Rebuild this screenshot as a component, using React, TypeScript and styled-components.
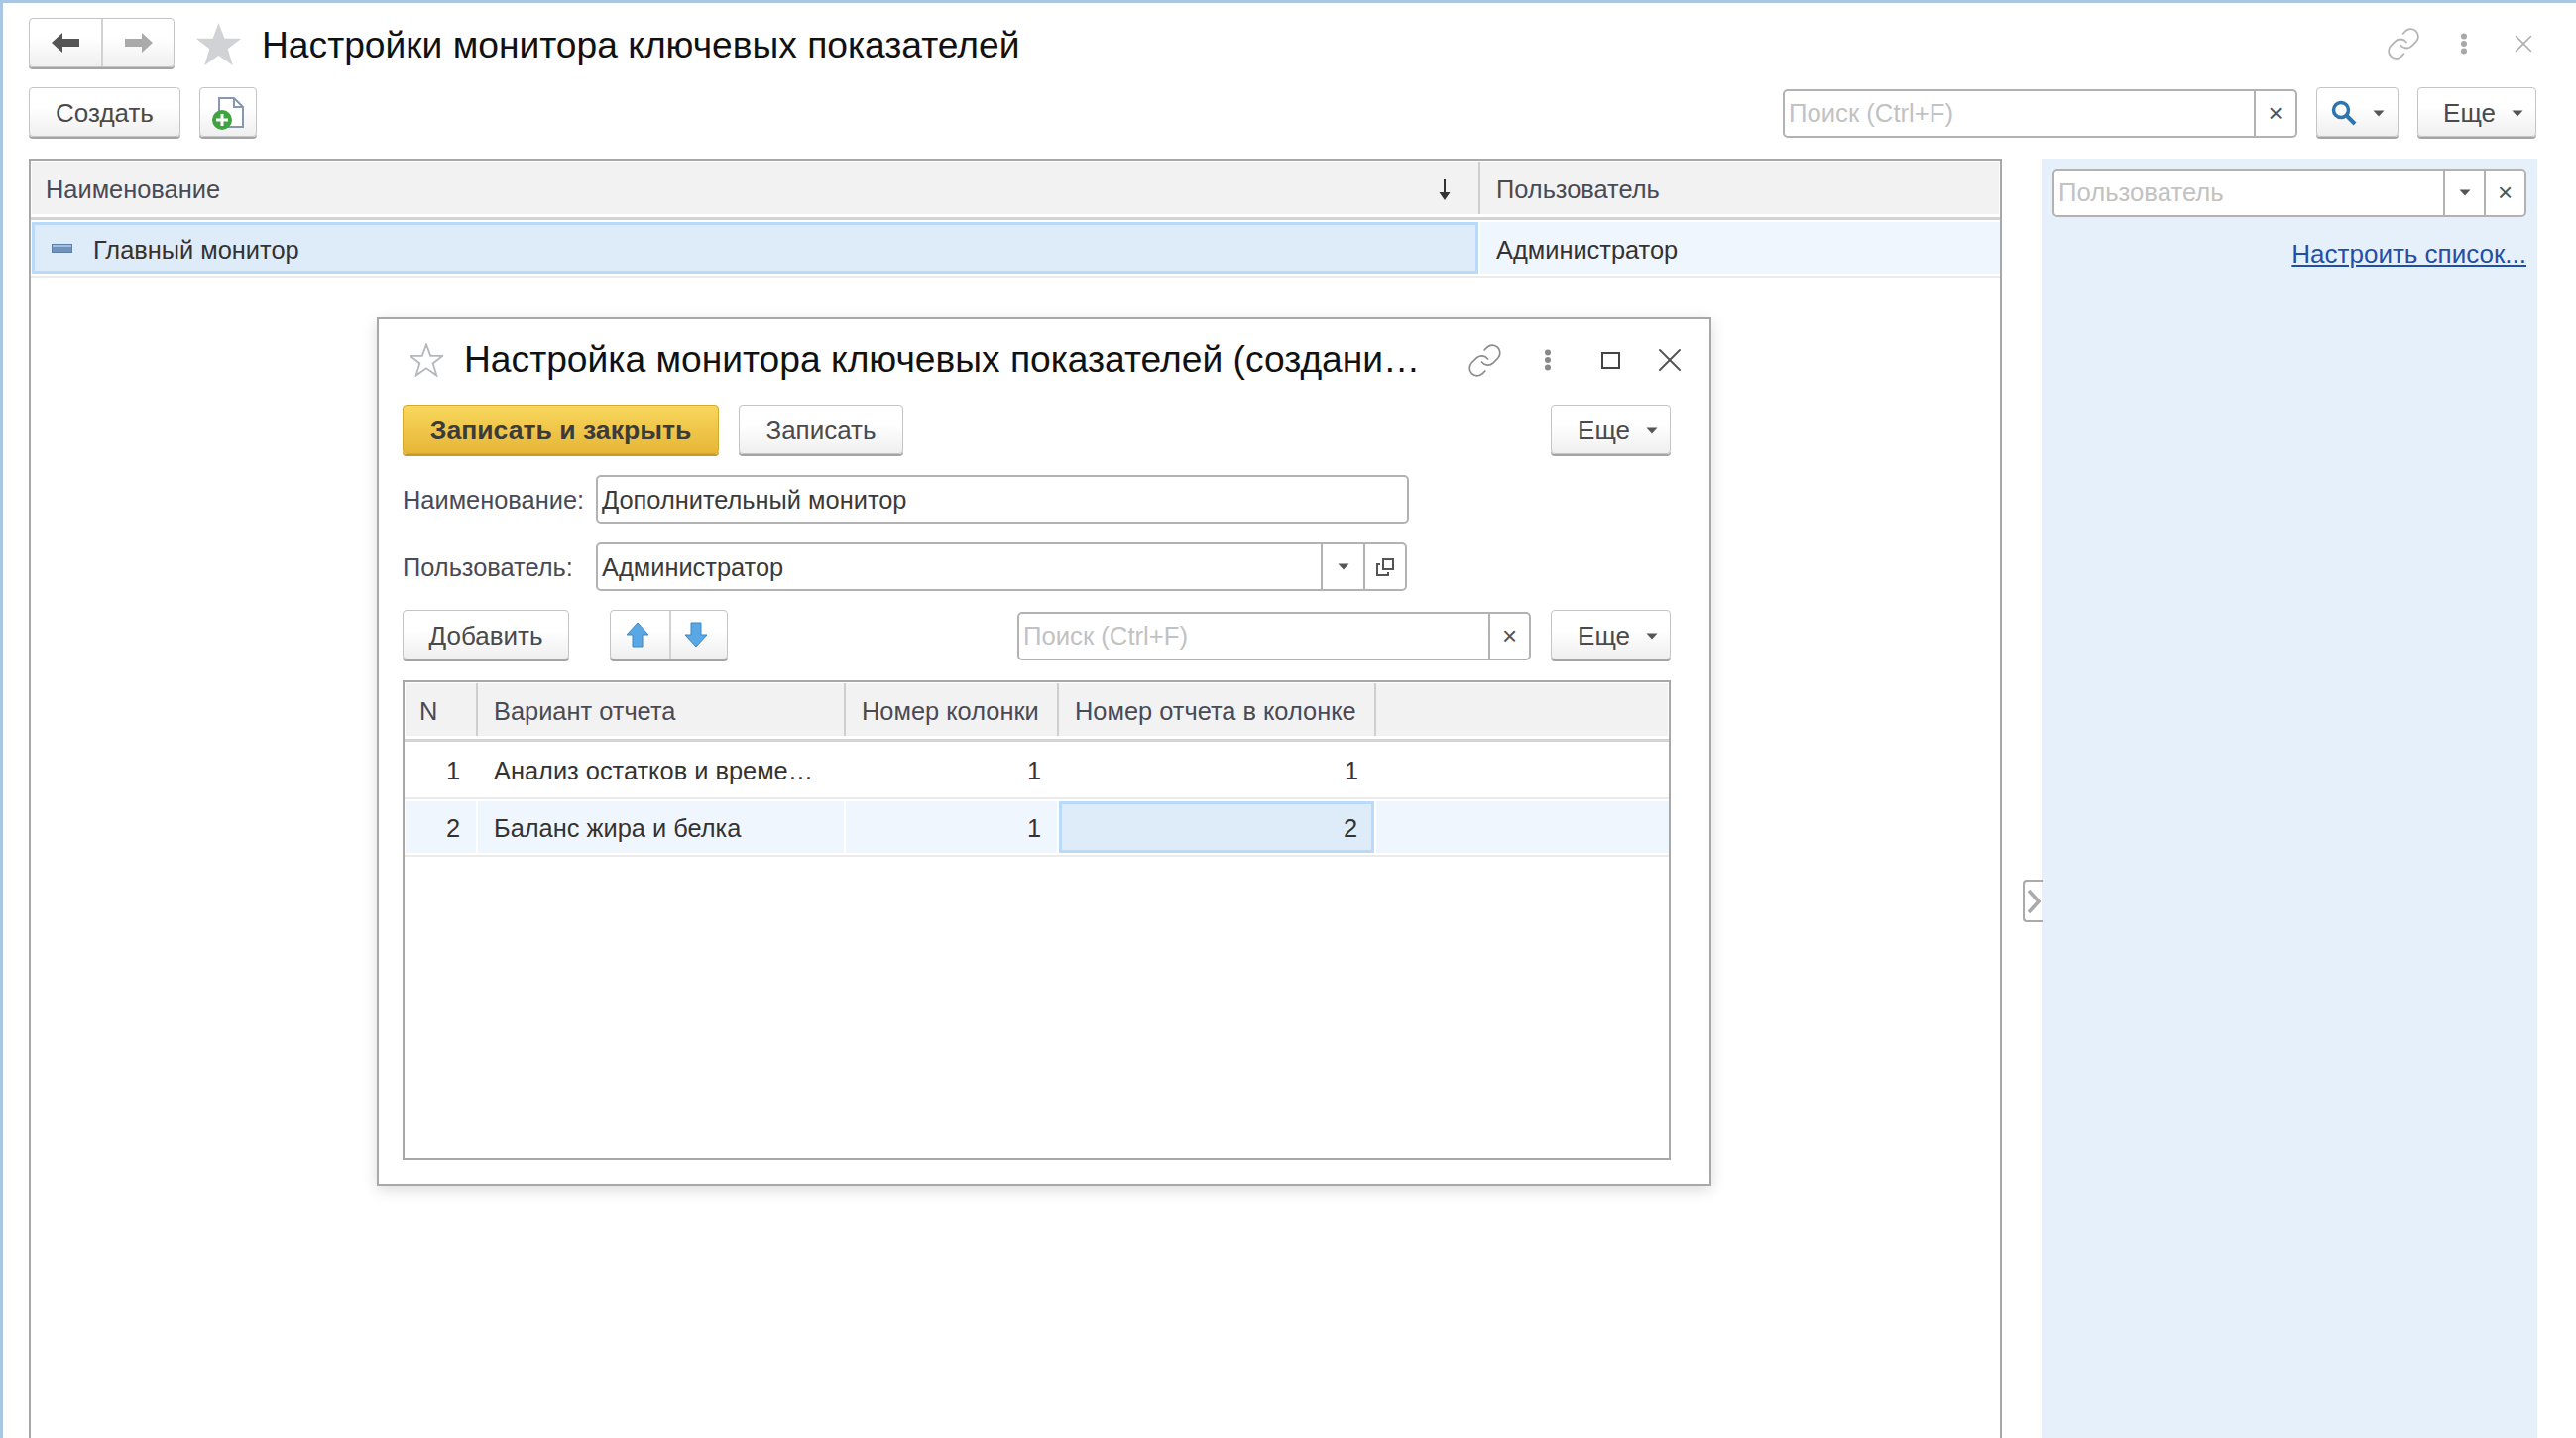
import styled, { createGlobalStyle } from "styled-components";
import { Link, X } from "lucide-react";

const GlobalStyle = createGlobalStyle`
    html, body {
        margin: 0;
        padding: 0;
        background: #fff;
    }

    * {
        box-sizing: border-box;
    }
`;

const Caret = () => (
    <svg width="12" height="7" viewBox="0 0 12 7">
        <path d="M0.5 0.5h11L6 6.5z" fill="#555" />
    </svg>
);

const ArrowLeftIcon = () => (
    <svg width="28" height="20" viewBox="0 0 28 20">
        <path d="M0 10 11 0v6h17v8H11v6z" fill="#555" />
    </svg>
);

const ArrowRightIcon = () => (
    <svg width="28" height="20" viewBox="0 0 28 20">
        <path d="M28 10 17 0v6H0v8h17v6z" fill="#aaa" />
    </svg>
);

const StarIcon = ({ size, hollow }: { size: number; hollow?: boolean }) => (
    <svg width={size} height={size} viewBox="0 0 24 24">
        <path
            d="M12 1l3 8.1h8.6l-6.9 5.3 2.6 8.6L12 17.9 4.7 23l2.6-8.6L.4 9.1H9z"
            fill={hollow ? "#fff" : "#d0d2d5"}
            stroke={hollow ? "#b4b8bd" : "none"}
            strokeWidth="1.3"
        />
    </svg>
);

const NewDocIcon = () => (
    <svg width="36" height="36" viewBox="0 0 36 36">
        <path d="M9 3h15l9 9v20H9z" fill="#fff" stroke="#8797ad" strokeWidth="2" />
        <path d="M24 3v9h9" fill="none" stroke="#8797ad" strokeWidth="2" />
        <circle cx="12" cy="25" r="10" fill="#3fa33f" />
        <path d="M12 19v12M6 25h12" stroke="#fff" strokeWidth="3" />
    </svg>
);

const SearchIcon = () => (
    <svg width="26" height="26" viewBox="0 0 26 26">
        <circle cx="10" cy="10" r="7.5" fill="none" stroke="#2f74ad" strokeWidth="3.5" />
        <path d="M15.5 15.5 24 24" stroke="#2f74ad" strokeWidth="4" />
    </svg>
);

const SortDownIcon = () => (
    <svg width="12" height="22" viewBox="0 0 12 22">
        <path d="M6 0v16" stroke="#333" strokeWidth="2" />
        <path d="M0.5 14h11L6 22z" fill="#333" />
    </svg>
);

const DotsIcon = ({ color }: { color: string }) => (
    <svg width="8" height="22" viewBox="0 0 8 22">
        <circle cx="4" cy="3.5" r="3" fill={color} />
        <circle cx="4" cy="11" r="3" fill={color} />
        <circle cx="4" cy="18.5" r="3" fill={color} />
    </svg>
);

const OpenIcon = () => (
    <svg width="20" height="20" viewBox="0 0 20 20">
        <rect x="8" y="2" width="10" height="10" fill="none" stroke="#555" strokeWidth="2" />
        <path d="M5 7H2v11h11v-3" fill="none" stroke="#555" strokeWidth="2" />
    </svg>
);

const MoveIcon = ({ down }: { down?: boolean }) => (
    <svg width="30" height="26" viewBox="0 0 30 26">
        <path
            d={down ? "M12 25 1 13h6V1h10v12h6z" : "M12 1 1 13h6v12h10V13h6z"}
            fill="#5aa7e6"
            stroke="#3d87c4"
            strokeWidth="1"
        />
    </svg>
);

const App = () => {
    return (
        <Page>
            <GlobalStyle />
            <TitleRow>
                <ButtonGroup>
                    <GroupButton $width={72}>
                        <ArrowLeftIcon />
                    </GroupButton>
                    <GroupButton $width={73}>
                        <ArrowRightIcon />
                    </GroupButton>
                </ButtonGroup>
                <StarSlot>
                    <StarIcon size={47} />
                </StarSlot>
                <PageTitle>Настройки монитора ключевых показателей</PageTitle>
                <WindowIcons>
                    <IconSlot $width={62}>
                        <Link size={36} color="#b4b4b4" strokeWidth={1.2} />
                    </IconSlot>
                    <IconSlot $width={60}>
                        <DotsIcon color="#a8a8a8" />
                    </IconSlot>
                    <IconSlot $width={60}>
                        <X size={30} color="#b0b0b0" strokeWidth={1.3} />
                    </IconSlot>
                </WindowIcons>
            </TitleRow>

            <Toolbar>
                <Button $width={153}>Создать</Button>
                <Button $width={58}>
                    <NewDocIcon />
                </Button>
                <ToolbarRight>
                    <InputBox $width={519}>
                        <Placeholder>Поиск (Ctrl+F)</Placeholder>
                        <InputAddon $width={42}>×</InputAddon>
                    </InputBox>
                    <Button $width={83}>
                        <SearchIcon />
                        <Caret />
                    </Button>
                    <MoreButton $width={120}>
                        Еще <Caret />
                    </MoreButton>
                </ToolbarRight>
            </Toolbar>

            <Content>
                <MainTable>
                    <HeaderRow $columns="1461px 1fr">
                        <HeaderCell>
                            Наименование
                            <SortSlot>
                                <SortDownIcon />
                            </SortSlot>
                        </HeaderCell>
                        <HeaderCell $last>Пользователь</HeaderCell>
                    </HeaderRow>
                    <Row $columns="1461px 1fr" $selected>
                        <Cell $active>
                            <TreeMark />
                            Главный монитор
                        </Cell>
                        <Cell>Администратор</Cell>
                    </Row>
                </MainTable>

                <Handle>
                    <svg width="14" height="26" viewBox="0 0 14 26">
                        <path d="M2 2l10 11L2 24" fill="none" stroke="#aaa" strokeWidth="3.5" />
                    </svg>
                </Handle>

                <SidePanel>
                    <InputBox $width={478}>
                        <Placeholder>Пользователь</Placeholder>
                        <InputAddon $width={41}>
                            <Caret />
                        </InputAddon>
                        <InputAddon $width={41}>×</InputAddon>
                    </InputBox>
                    <PanelLink href="#">Настроить список...</PanelLink>
                </SidePanel>
            </Content>

            <Dialog>
                <DialogHeader>
                    <StarIcon size={34} hollow />
                    <DialogTitle>Настройка монитора ключевых показателей (создани…</DialogTitle>
                    <DialogIcons>
                        <IconSlot $width={62}>
                            <Link size={37} color="#8c8c8c" strokeWidth={1.1} />
                        </IconSlot>
                        <IconSlot $width={66}>
                            <DotsIcon color="#888" />
                        </IconSlot>
                        <IconSlot $width={60}>
                            <MaximizeIcon />
                        </IconSlot>
                        <IconSlot $width={60}>
                            <X size={40} color="#555" strokeWidth={1.2} />
                        </IconSlot>
                    </DialogIcons>
                </DialogHeader>

                <DialogToolbar>
                    <PrimaryButton>Записать и закрыть</PrimaryButton>
                    <Button $width={166}>Записать</Button>
                    <MoreButton $width={121} $pushRight>
                        Еще <Caret />
                    </MoreButton>
                </DialogToolbar>

                <FieldRow>
                    <FieldLabel>Наименование:</FieldLabel>
                    <InputBox $width={820}>
                        <InputValue>Дополнительный монитор</InputValue>
                    </InputBox>
                </FieldRow>

                <FieldRow>
                    <FieldLabel>Пользователь:</FieldLabel>
                    <InputBox $width={818}>
                        <InputValue>Администратор</InputValue>
                        <InputAddon $width={43}>
                            <Caret />
                        </InputAddon>
                        <InputAddon $width={42}>
                            <OpenIcon />
                        </InputAddon>
                    </InputBox>
                </FieldRow>

                <DialogToolbar>
                    <Button $width={168}>Добавить</Button>
                    <ButtonGroup $gapLeft={21}>
                        <GroupButton $width={59}>
                            <MoveIcon />
                        </GroupButton>
                        <GroupButton $width={58}>
                            <MoveIcon down />
                        </GroupButton>
                    </ButtonGroup>
                    <InputBox $width={518} $pushRight>
                        <Placeholder>Поиск (Ctrl+F)</Placeholder>
                        <InputAddon $width={41}>×</InputAddon>
                    </InputBox>
                    <MoreButton $width={121}>
                        Еще <Caret />
                    </MoreButton>
                </DialogToolbar>

                <ReportTable>
                    <HeaderRow $columns={REPORT_COLUMNS}>
                        <HeaderCell>N</HeaderCell>
                        <HeaderCell>Вариант отчета</HeaderCell>
                        <HeaderCell>Номер колонки</HeaderCell>
                        <HeaderCell>Номер отчета в колонке</HeaderCell>
                        <HeaderCell $last />
                    </HeaderRow>
                    <Row $columns={REPORT_COLUMNS}>
                        <Cell $right>1</Cell>
                        <Cell>Анализ остатков и време…</Cell>
                        <Cell $right>1</Cell>
                        <Cell $right>1</Cell>
                        <Cell />
                    </Row>
                    <Row $columns={REPORT_COLUMNS} $selected>
                        <Cell $right>2</Cell>
                        <Cell>Баланс жира и белка</Cell>
                        <Cell $right>1</Cell>
                        <Cell $right $active>2</Cell>
                        <Cell />
                    </Row>
                </ReportTable>
            </Dialog>
        </Page>
    );
};

const REPORT_COLUMNS = "73px 371px 215px 320px 1fr";
const FONT = `"Liberation Sans", Arial, sans-serif`;

const Page = styled.div`
    position: relative;
    width: 2598px;
    height: 1450px;
    overflow: hidden;
    display: flex;
    flex-flow: column;
    padding: 17px 39px 0 26px;
    border-top: 3px solid #a9c6e4;
    border-left: 3px solid #a9c6e4;
    background: #fff;
    color: #333;
    font-family: ${FONT};
    font-size: 26px;
`;

const TitleRow = styled.div`
    display: flex;
    align-items: center;
    height: 48px;
`;

const PageTitle = styled.h1`
    margin: 0 0 0 20px;
    padding-top: 2px;
    font-weight: 400;
    font-size: 37.2px;
    color: #111;
`;

const StarSlot = styled.span`
    display: flex;
    margin-left: 21px;
`;

const WindowIcons = styled.div`
    display: flex;
    align-items: center;
    margin-left: auto;
    margin-right: -16px;
`;

const IconSlot = styled.span<{ $width: number }>`
    display: flex;
    align-items: center;
    justify-content: center;
    flex: none;
    width: ${(props) => props.$width}px;
`;

const Toolbar = styled.div`
    display: flex;
    align-items: center;
    gap: 19px;
    height: 52px;
    margin-top: 20px;
    padding-right: 1px;
`;

const ToolbarRight = styled.div`
    display: flex;
    align-items: center;
    gap: 19px;
    margin-left: auto;
`;

const Button = styled.button<{ $width: number }>`
    display: flex;
    align-items: center;
    justify-content: center;
    gap: 16px;
    flex: none;
    width: ${(props) => props.$width}px;
    height: 50px;
    margin-bottom: 2px;
    padding: 2px 0 0;
    border: 1px solid #c4c4c4;
    border-radius: 4px;
    background: linear-gradient(#fff 40%, #efefef);
    box-shadow: 0 2px 0 #a4a4a4;
    color: #4a4a4a;
    font-family: ${FONT};
    font-size: 26px;
`;

const MoreButton = styled(Button)<{ $pushRight?: boolean }>`
    justify-content: flex-end;
    padding-right: 12px;
    margin-left: ${(props) => (props.$pushRight ? "auto" : "0")};
`;

const PrimaryButton = styled(Button).attrs({ $width: 319 })`
    border-color: #d6a92c;
    background: linear-gradient(#f8d75c, #e6b638);
    box-shadow: 0 2px 0 #c79a2a;
    color: #3b3b3b;
    font-size: 26.6px;
    font-weight: 700;
`;

const ButtonGroup = styled.div<{ $gapLeft?: number }>`
    display: flex;
    flex: none;
    height: 50px;
    margin-left: ${(props) => props.$gapLeft ?? 0}px;
    margin-bottom: 2px;
    border: 1px solid #c4c4c4;
    border-radius: 4px;
    background: linear-gradient(#fff 40%, #efefef);
    box-shadow: 0 2px 0 #a4a4a4;
`;

const GroupButton = styled.span<{ $width: number }>`
    display: flex;
    align-items: center;
    justify-content: center;
    width: ${(props) => props.$width}px;

    & + & {
        border-left: 2px solid #d2d2d2;
    }
`;

const InputBox = styled.div<{ $width: number; $pushRight?: boolean }>`
    display: flex;
    flex: none;
    width: ${(props) => props.$width}px;
    height: 49px;
    margin-left: ${(props) => (props.$pushRight ? "auto" : "0")};
    border: 2px solid #b2b2b2;
    border-radius: 5px;
    background: #fff;
`;

const Placeholder = styled.span`
    flex: 1;
    align-self: center;
    padding-left: 4px;
    color: #c2c2c2;
    font-size: 25.7px;
`;

const InputValue = styled(Placeholder)`
    margin-top: 2px;
    color: #3a3a3a;
    font-size: 25.4px;
`;

const InputAddon = styled.span<{ $width: number }>`
    display: flex;
    align-items: center;
    justify-content: center;
    flex: none;
    width: ${(props) => props.$width}px;
    border-left: 2px solid #b2b2b2;
    color: #555;
`;

const Content = styled.div`
    position: relative;
    flex: 1;
    display: flex;
    gap: 40px;
    margin-top: 20px;
`;

const HeaderRow = styled.div<{ $columns: string }>`
    display: grid;
    grid-template-columns: ${(props) => props.$columns};
    height: 60px;
    padding: 1px 1px 3px;
    border-bottom: 3px solid #d4d4d4;
`;

const HeaderCell = styled.div<{ $last?: boolean }>`
    display: flex;
    align-items: center;
    justify-content: space-between;
    padding: 3px 16px 0;
    background: #f2f2f2;
    border-right: ${(props) => (props.$last ? "0" : "2px solid #cfcfcf")};
    color: #4a4a55;
    font-size: 25.4px;
    white-space: nowrap;

    &:first-child {
        padding-left: 14px;
    }
`;

const SortSlot = styled.span`
    display: flex;
    margin-right: 12px;
`;

const Row = styled.div<{ $columns: string; $selected?: boolean }>`
    display: grid;
    grid-template-columns: ${(props) => props.$columns};
    height: 58px;
    padding: 2px 0 2px 1px;
    border-bottom: 2px solid #ebebeb;

    & > * {
        background: ${(props) => (props.$selected ? "#f0f6fe" : "#fff")};
        border-right: 2px solid #fff;
    }

    & > *:last-child {
        border-right: 0;
    }
`;

const Cell = styled.div<{ $right?: boolean; $active?: boolean }>`
    display: flex;
    align-items: center;
    justify-content: ${(props) => (props.$right ? "flex-end" : "flex-start")};
    padding: 3px 16px 0;
    color: #333;
    font-size: 25.4px;
    white-space: nowrap;

    &:first-child {
        padding-left: 13px;
    }

    && {
        ${(props) =>
            props.$active &&
            `
            margin-right: 2px;
            padding-right: 14px;
            background: #deebf9;
            border: 3px solid #b9daf8;
        `}
    }
`;

const MainTable = styled.div`
    width: 1991px;
    border: 2px solid #a8a8a8;
    border-bottom: 0;

    & ${Cell} {
        padding-top: 5px;
    }
`;

const TreeMark = styled.span`
    width: 21px;
    height: 9px;
    margin: 0 21px 4px 4px;
    background: #6f93bd;
    border: 1px solid #5d7fa8;
    box-shadow: inset 0 2px 0 #9fc0e4;
`;

const Handle = styled.div`
    position: absolute;
    left: 2011px;
    top: 727px;
    display: flex;
    align-items: center;
    justify-content: center;
    width: 20px;
    height: 43px;
    border: 2px solid #aaa;
    border-right: 0;
    border-radius: 4px 0 0 4px;
`;

const SidePanel = styled.div`
    flex: 1;
    display: flex;
    flex-flow: column;
    align-items: flex-end;
    padding: 10px 11px 0;
    background: #e6f0fb;
`;

const PanelLink = styled.a`
    margin-top: 22px;
    color: #1f4fa8;
    text-decoration: underline;
`;

const Dialog = styled.div`
    position: absolute;
    left: 377px;
    top: 317px;
    display: flex;
    flex-flow: column;
    width: 1346px;
    height: 876px;
    padding: 18px 39px 24px 24px;
    border: 2px solid #a8a8a8;
    background: #fff;
    box-shadow: 0 4px 14px rgba(0, 0, 0, 0.14);
`;

const DialogHeader = styled.div`
    display: flex;
    align-items: center;
    height: 46px;
    margin-bottom: 22px;
    padding-left: 7px;
`;

const DialogTitle = styled.h2`
    margin: 0 0 2px 21px;
    font-weight: 400;
    font-size: 37.2px;
    color: #111;
    white-space: nowrap;
`;

const DialogIcons = styled.div`
    display: flex;
    align-items: center;
    margin-left: auto;
    margin-right: -29px;
`;

const MaximizeIcon = styled.span`
    width: 19px;
    height: 17px;
    border: 2px solid #444;
`;

const DialogToolbar = styled.div`
    display: flex;
    align-items: center;
    gap: 20px;
    height: 52px;
    margin-bottom: 19px;
`;

const FieldRow = styled.div`
    display: flex;
    align-items: center;
    height: 49px;
    margin-bottom: 19px;
`;

const FieldLabel = styled.label`
    flex: none;
    width: 195px;
    padding-top: 2px;
    color: #4a4a55;
    font-size: 25.4px;
`;

const ReportTable = styled.div`
    flex: 1;
    border: 2px solid #a8a8a8;
`;

export default App;
